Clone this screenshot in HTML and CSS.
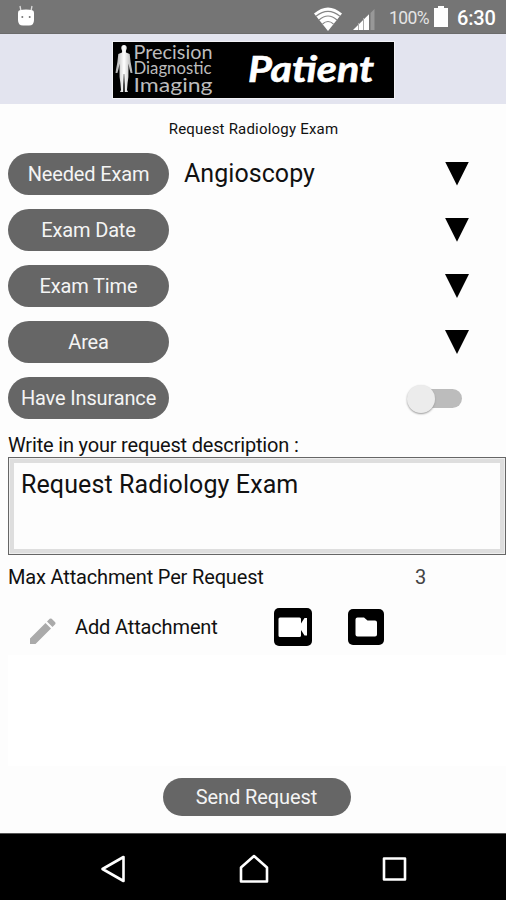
FILE: index.html
```html
<!DOCTYPE html>
<html lang="en">
<head>
<meta charset="utf-8">
<title>Request Radiology Exam</title>
<link rel="stylesheet" href="styles.css">
</head>
<body>
<div class="status">
  <svg class="robot" width="18" height="22" viewBox="0 0 18 22"><path d="M4 6 3 1M14 6l1-5" stroke="#ddd" stroke-width="1.3"/><path d="M2 5.500Q9 3.500 16 5.500Q17 6 17 8V15Q17 20.500 12 20.500H6Q1 20.500 1 15V8Q1 6 2 5.500Z" fill="#fff"/><circle cx="5.300" cy="12" r="1" fill="#777"/><circle cx="12.700" cy="12" r="1" fill="#777"/></svg>
  <svg class="wifi" width="28" height="24" viewBox="0 0 28 24"><path d="M0 6.500Q14-5.500 28 6.500L14 24Z" fill="#fff"/><path d="M2 9.300Q14-.5 26 9.300M5 13Q14 5 23 13M8.500 17Q14 12 19.500 17" fill="none" stroke="#858585" stroke-width="1.100"/></svg>
  <svg class="signal" width="22" height="21" viewBox="0 0 22 21"><path d="M0 21 16 5.300V21Z" fill="#fff"/><path d="M17.500 4 21.500 0V21h-4Z" fill="#989898"/><path d="M5.500 14v7M10.500 9v12" stroke="#aaa"/></svg>
  <span class="percent">100%</span>
  <svg class="battery" width="14" height="21" viewBox="0 0 14 21"><path d="M0 2H4V0H10V2H14V21H0Z" fill="#fff"/></svg>
  <span class="clock">6:30</span>
</div>
<header class="header">
  <svg class="logo" width="281" height="56" viewBox="0 0 281 56">
    <defs><linearGradient id="skin"><stop offset="0" stop-color="#aaa"/><stop offset=".5" stop-color="#fff"/><stop offset="1" stop-color="#aaa"/></linearGradient></defs>
    <rect width="281" height="56" fill="#000"/>
    <path fill="url(#skin)" d="M11 3Q14 3 13.700 6.500L12.900 9 13 10.500 16.700 12 17.600 20 19 27.500 19.500 31 17.600 31 16.500 27 15.500 21.500 15.500 27 15.400 35 14.600 41 14 48 15 50H11.800L11.700 43 11.200 32H10.800L10.300 43 10.200 50H7L8 48 7.400 41 6.600 35 6.500 27V21.500L5.500 27 4.400 31H2.500L3 27.500 4.400 20 5.300 12 9 10.500 9.100 9 8.300 6.500Q8 3 11 3Z"/>
    <text class="brand" x="20.500" y="17" font-size="19" textLength="79" lengthAdjust="spacingAndGlyphs">Precision</text>
    <text class="brand" x="20.500" y="31.500" font-size="16.500" textLength="78" lengthAdjust="spacingAndGlyphs">Diagnostic</text>
    <text class="brand" x="20.500" y="50" font-size="20" textLength="79" lengthAdjust="spacingAndGlyphs">Imaging</text>
    <text class="patient" x="135" y="39.500" font-size="37" textLength="126" lengthAdjust="spacingAndGlyphs">Patient</text>
  </svg>
</header>
<main class="main">
  <h1 class="title">Request Radiology Exam</h1>
  <section class="fields">
    <div class="row"><span class="pill">Needed Exam</span><span class="value">Angioscopy</span><i class="arrow"></i></div>
    <div class="row"><span class="pill">Exam Date</span><i class="arrow"></i></div>
    <div class="row"><span class="pill">Exam Time</span><i class="arrow"></i></div>
    <div class="row"><span class="pill">Area</span><i class="arrow"></i></div>
    <div class="row"><span class="pill">Have Insurance</span><span class="switch"><i class="knob"></i></span></div>
  </section>
  <p class="label">Write in your request description :</p>
  <div class="description">Request Radiology Exam</div>
  <div class="limit"><span>Max Attachment Per Request</span><span class="count">3</span></div>
  <div class="attach">
    <svg class="pencil" width="26" height="26" viewBox="0 0 26 26"><path fill="#aaa" d="M0 26V20.500L15.500 5 21 10.500 5.500 26ZM17 3.500 19.700.8Q20.700 0 21.700.8L25.200 4.300Q26 5.300 25.200 6.300L22.500 9Z"/></svg>
    <span class="add">Add Attachment</span>
    <svg class="video" width="38" height="38" viewBox="0 0 38 38"><rect width="38" height="38" rx="5"/><path fill="#fff" d="M6 9.500H25.500Q27 9.500 27 11V15.500L30.500 10H33V27.500H30.500L27 22V27.500Q27 29 25.500 29H6Q4.500 29 4.500 27.500V11Q4.500 9.500 6 9.500Z"/></svg>
    <svg class="folder" width="36" height="36" viewBox="0 0 36 36"><rect width="36" height="36" rx="5"/><path fill="#fff" d="M9.500 8.500H16L19.500 11.500H27Q29 11.500 29 13.500V25.500Q29 27.500 27 27.500H9.500Q7.500 27.500 7.500 25.500V10.500Q7.500 8.500 9.500 8.500Z"/></svg>
  </div>
  <div class="files"></div>
  <div class="send">Send Request</div>
</main>
<nav class="nav">
  <svg width="26" height="30" viewBox="0 0 26 30"><path d="M23.500 3V27L2.500 15Z"/></svg>
  <svg width="30" height="30" viewBox="0 0 30 30"><path d="M2 27.500V13.500L15 2 28 13.500V27.500Z"/></svg>
  <svg width="26" height="30" viewBox="0 0 26 30"><path d="M3 4.500H24V25.500H3Z"/></svg>
</nav>
</body>
</html>
```

FILE: styles.css
```css
* { box-sizing: border-box; }
body {
  margin: 0;
  width: 506px;
  height: 900px;
  display: flex;
  flex-direction: column;
  overflow: hidden;
  background: #fdfdfd;
  color: #111;
  font-family: Roboto, "Liberation Sans", sans-serif;
}
svg { display: block; flex: none; }
.status {
  height: 34px;
  display: flex;
  align-items: center;
  background: #757575;
  border-bottom: 1px solid #6b6b6b;
  color: #fff;
  white-space: nowrap;
}
.robot { margin: -1px 0 0 17px; }
.wifi { margin: 4px 0 0 279px; }
.signal { margin: 5px 0 0 11px; }
.percent { width: 44px; margin: 3px 0 0 14px; font-size: 17.500px; letter-spacing: -.6px; color: #e4e4e4; }
.battery { margin-left: 1px; }
.clock { margin: 3px 0 0 9px; font-size: 20px; font-weight: 500; letter-spacing: -.2px; }
.header { height: 70px; padding: 7.500px 0 0 113px; background: #e3e4ef; }
.logo { outline: 1px solid #f2f2f6; }
.brand { font-family: Lato, sans-serif; fill: #bcbcbc; }
.patient { font-family: Lato, sans-serif; font-weight: 700; font-style: italic; fill: #fff; stroke: #fff; stroke-width: .6px; }
.main { height: 729px; display: flex; flex-direction: column; }
.title { margin: 16px 0 0; height: 32.500px; padding-left: 1px; font-size: 15px; line-height: 18px; font-weight: 400; text-align: center; letter-spacing: .2px; }
.fields { display: flex; flex-direction: column; gap: 14.200px; padding-left: 8px; }
.row { height: 42px; display: flex; align-items: center; padding-right: 37px; }
.pill {
  width: 161px;
  height: 42px;
  border-radius: 21px;
  background: #666;
  color: #f4f4f4;
  font-size: 20px;
  line-height: 43px;
  letter-spacing: -.15px;
  text-align: center;
  white-space: nowrap;
}
.value { margin-left: 15px; font-size: 25px; letter-spacing: .05px; }
.arrow { width: 24px; height: 24px; margin-left: auto; background: #000; clip-path: polygon(0 0, 100% 0, 50% 100%); }
.switch { position: relative; width: 50px; height: 19px; margin: 0 7px 0 auto; border-radius: 10px; background: #bcbcbc; }
.knob { position: absolute; left: -5px; top: -4px; width: 28px; height: 28px; border-radius: 50%; background: #ececec; box-shadow: 0 1px 2px #999; }
.label { margin: 13.700px 0 0 8px; height: 24px; font-size: 20px; line-height: 25px; letter-spacing: -.18px; }
.description {
  height: 98px;
  margin-left: 8px;
  padding: 8px 12px;
  border: 1px solid #666;
  box-shadow: inset 0 0 0 1px #eee, inset 0 0 0 5px #dedede;
  background: #fdfdfd;
  font-size: 25px;
  line-height: 38px;
  letter-spacing: .1px;
}
.limit { height: 44px; padding-left: 8px; display: flex; font-size: 20px; line-height: 44px; white-space: nowrap; letter-spacing: -.16px; }
.limit span:first-child { width: 407px; }
.count { color: #444; }
.attach { height: 56px; display: flex; align-items: center; padding-left: 30px; }
.pencil { margin-top: 9px; }
.add { width: 198px; padding-left: 19px; font-size: 20px; letter-spacing: -.14px; }
.video { margin-left: 20px; }
.folder { margin-left: 36px; }
.files { height: 111px; margin: 0 0 12px 8px; background: #fff; }
.send { width: 188px; height: 38px; margin: 0 0 0 162.500px; border-radius: 19px; background: #666; color: #f4f4f4; font-size: 20px; line-height: 39px; letter-spacing: -.1px; text-align: center; }
.nav { height: 67px; display: flex; align-items: center; gap: 112.500px; padding: 4px 0 0 100px; background: #000; border-top: 1px solid #555; }
.nav path { fill: none; stroke: #fff; stroke-width: 2.600; stroke-linejoin: round; }
```
